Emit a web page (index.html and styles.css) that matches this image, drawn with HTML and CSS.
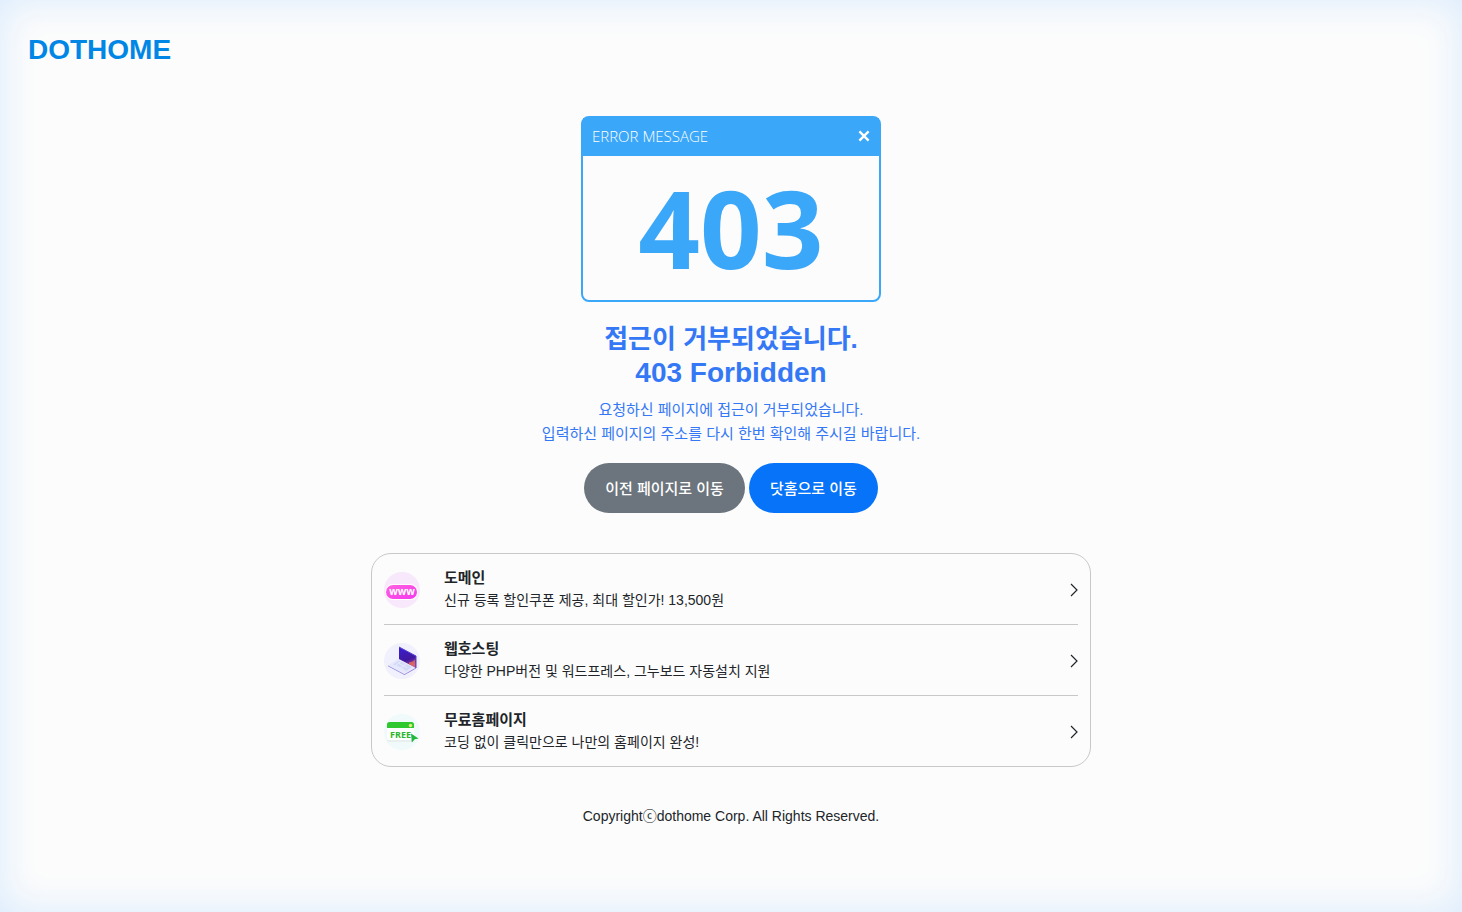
FILE: index.html
```html
<!DOCTYPE html>
<html lang="ko">
<head>
  <meta charset="UTF-8">
  <meta name="viewport" content="width=device-width, initial-scale=1.0">
  <title>403 Forbidden | DOTHOME</title>
  <link rel="stylesheet" href="styles.css">
</head>
<body>
  <header class="header">
    <a class="logo" href="/">DOTHOME</a>
  </header>

  <main class="container">
    <div class="window">
      <div class="window-bar">
        <span>ERROR MESSAGE</span>
        <svg width="12" height="12" viewBox="0 0 12 12" aria-hidden="true">
          <path d="M1.4 1.4l9.2 9.2M10.6 1.4l-9.2 9.2" fill="none" stroke="#fff" stroke-width="2.4"/>
        </svg>
      </div>
      <div class="window-code">403</div>
    </div>

    <h1 class="title">접근이 거부되었습니다.<span class="title-en">403 Forbidden</span></h1>
    <p class="message">요청하신 페이지에 접근이 거부되었습니다.<br>입력하신 페이지의 주소를 다시 한번 확인해 주시길 바랍니다.</p>

    <div class="buttons">
      <button type="button" class="btn btn-back" onclick="history.back()">이전 페이지로 이동</button>
      <button type="button" class="btn btn-home" onclick="location.href='/'">닷홈으로 이동</button>
    </div>

    <ul class="services">
      <li>
        <a class="service" href="/domain">
          <svg class="service-icon" viewBox="0 0 36 36" aria-hidden="true">
            <defs>
              <linearGradient id="pink" x1="0" y1="0" x2="1" y2="1">
                <stop offset="0" stop-color="#ff62e0"/>
                <stop offset="1" stop-color="#f536ee"/>
              </linearGradient>
            </defs>
            <circle cx="18" cy="18" r="18" fill="#f8e8fb"/>
            <rect x="1" y="12" width="33" height="16" rx="8" fill="#fff"/>
            <rect x="2" y="13" width="31" height="14" rx="7" fill="url(#pink)"/>
            <text class="www" x="18" y="23">www</text>
          </svg>
          <span class="service-text">
            <strong>도메인</strong>
            <span>신규 등록 할인쿠폰 제공, 최대 할인가! 13,500원</span>
          </span>
          <svg class="arrow" viewBox="0 0 8 14" aria-hidden="true"><path d="M1 1l6 6-6 6"/></svg>
        </a>
      </li>
      <li>
        <a class="service" href="/hosting">
          <svg class="service-icon" viewBox="0 0 36 36" aria-hidden="true">
            <defs>
              <linearGradient id="screen" x1="0" y1="0" x2="0.3" y2="1">
                <stop offset="0" stop-color="#3b1fd0"/>
                <stop offset="0.7" stop-color="#40189f"/>
                <stop offset="1" stop-color="#a0449a"/>
              </linearGradient>
            </defs>
            <circle cx="18" cy="18" r="18" fill="#f1f0fd"/>
            <path d="M4 22.500L15 15l17 9-11.500 7z" fill="#e6e8fb"/>
            <path d="M9 21.500l6-4 13 6.500-6 4z" fill="#d3d9f6"/>
            <path d="M11 22l9 4.500M14 20l9 4.500M17 18.500l-5 3.500M22 21l-5 3.500" stroke="#edf0ff" stroke-width="0.700"/>
            <path d="M4 22.500l16.500 8.700L32 24.500v1L20.500 32 4 23.300z" fill="#8d7dd8"/>
            <path d="M15 4l17 9v12l-17-9z" fill="url(#screen)"/>
            <path d="M15 4l17 9v12" fill="none" stroke="#5740d8" stroke-width="1"/>
            <path d="M25 19.500l3.500-1 2.500-2v7.500l-6-3z" fill="#f0714f" opacity="0.750"/>
          </svg>
          <span class="service-text">
            <strong>웹호스팅</strong>
            <span>다양한 PHP버전 및 워드프레스, 그누보드 자동설치 지원</span>
          </span>
          <svg class="arrow" viewBox="0 0 8 14" aria-hidden="true"><path d="M1 1l6 6-6 6"/></svg>
        </a>
      </li>
      <li>
        <a class="service" href="/homepage">
          <svg class="service-icon" viewBox="0 0 36 36" aria-hidden="true">
            <circle cx="18" cy="18" r="18" fill="#f0fafb"/>
            <rect x="3" y="9" width="27" height="19" rx="2" fill="#e9eeee"/>
            <rect x="3" y="9" width="27" height="17" rx="2" fill="#fff"/>
            <path d="M3 14v-3.500a2.500 2.500 0 0 1 2.500-2.500h22a2.500 2.500 0 0 1 2.500 2.500V14z" fill="#2fc82f"/>
            <circle cx="26.500" cy="11.500" r="1.700" fill="#e8eb7b"/>
            <text class="free" x="6" y="24">FREE</text>
            <path d="M27 19.500l7.500 5-3.700.8-3 3.200z" fill="#20b83a"/>
          </svg>
          <span class="service-text">
            <strong>무료홈페이지</strong>
            <span>코딩 없이 클릭만으로 나만의 홈페이지 완성!</span>
          </span>
          <svg class="arrow" viewBox="0 0 8 14" aria-hidden="true"><path d="M1 1l6 6-6 6"/></svg>
        </a>
      </li>
    </ul>
  </main>

  <footer class="footer">Copyright<span class="copy">ⓒ</span>dothome Corp. All Rights Reserved.</footer>
</body>
</html>
```
FILE: styles.css
```css
* {
  box-sizing: border-box;
}
body {
  margin: 0;
  min-height: 100vh;
  background: #fcfcfc;
  box-shadow: inset 0 0 40px #d8eafd;
  color: #212529;
  font-family: "Liberation Sans", "Noto Sans CJK KR", sans-serif;
  font-size: 15px;
  line-height: 24px;
}
a {
  color: inherit;
  text-decoration: none;
}
.header {
  padding: 32px 28px 0;
}
.logo {
  display: block;
  width: fit-content;
  color: #0086e5;
  font-size: 28px;
  font-weight: 700;
  line-height: 36px;
}
.container {
  max-width: 720px;
  margin: 48px auto 0;
  text-align: center;
}

/* error window */
.window {
  max-width: 300px;
  margin: 0 auto;
  border: 2px solid #3ba7f9;
  border-radius: 8px;
  color: #3ba7f9;
  font-family: "Open Sans", "Noto Sans", sans-serif;
}
.window-bar {
  display: flex;
  align-items: center;
  justify-content: space-between;
  height: 38px;
  padding: 0 9px 2px;
  background: #3ba7f9;
  color: #fff;
  font-size: 15px;
  font-weight: 300;
}
.window-code {
  height: 144px;
  font-size: 108px;
  font-weight: 700;
  line-height: 144px;
}

.title {
  margin: 20px 0 8px;
  color: #3478f6;
  font-size: 26px;
  font-weight: 700;
  line-height: 34px;
}
.title-en {
  display: block;
  font-size: 28px;
}
.message {
  margin: 0;
  color: #3478f6;
}

.buttons {
  display: flex;
  justify-content: center;
  gap: 4px;
  margin-top: 17px;
}
.btn {
  height: 50px;
  padding: 0 21px 2px;
  border: 0;
  border-radius: 25px;
  color: #fff;
  font-family: inherit;
  font-size: 15px;
  font-weight: 500;
  cursor: pointer;
}
.btn-back {
  background: #6c757d;
}
.btn-home {
  background: #0673f9;
}

/* service links */
.services {
  margin: 40px 0 0;
  padding: 0 12px;
  border: 1px solid #c8c8c8;
  border-radius: 20px;
  list-style: none;
  text-align: left;
}
.services li + li {
  border-top: 1px solid #c8c8c8;
}
.service {
  display: flex;
  align-items: center;
  height: 70px;
}
.service-icon {
  width: 36px;
  height: 36px;
  margin-right: 24px;
}
.service-text {
  flex: 1;
  font-size: 14px;
  line-height: 23px;
}
.service-text strong,
.service-text span {
  display: block;
}
.service-text strong {
  font-size: 15px;
}
.arrow {
  width: 8px;
  height: 14px;
  fill: none;
  stroke: #212529;
  stroke-width: 1.2;
}
.service-icon,
.arrow {
  margin-top: 2px;
}
.www,
.free {
  font-family: "Open Sans", sans-serif;
  font-weight: 700;
}
.www {
  fill: #fff;
  font-size: 10px;
  text-anchor: middle;
}
.free {
  fill: #2db52d;
  font-size: 9px;
}

.footer {
  padding: 36px 0 40px;
  font-size: 14px;
  text-align: center;
}
.copy {
  font-family: "Noto Sans CJK KR", sans-serif;
}
```
